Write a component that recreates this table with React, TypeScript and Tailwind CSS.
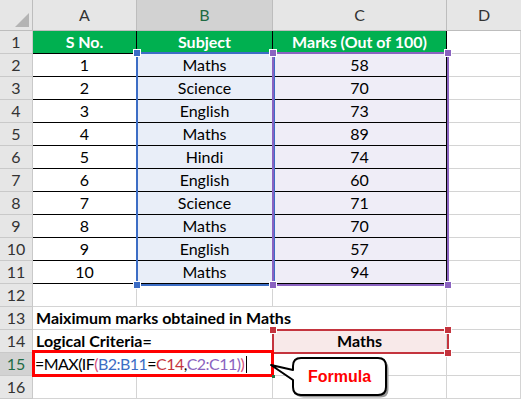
import React from "react"

const rows = [
  { n: 1, subject: "Maths", marks: 58 },
  { n: 2, subject: "Science", marks: 70 },
  { n: 3, subject: "English", marks: 73 },
  { n: 4, subject: "Maths", marks: 89 },
  { n: 5, subject: "Hindi", marks: 74 },
  { n: 6, subject: "English", marks: 60 },
  { n: 7, subject: "Science", marks: 71 },
  { n: 8, subject: "Maths", marks: 70 },
  { n: 9, subject: "English", marks: 57 },
  { n: 10, subject: "Maths", marks: 94 },
]

const grid = "border-r border-b border-[#d4d4d4]"
const black = "border-r border-b border-black"

function RowHead({ n, active }: { n: number; active?: boolean }) {
  return (
    <div
      className={`flex items-center justify-center border-r border-b border-[#c9c9c9] ${
        active ? "bg-[#d2d2d2] text-[#1f6b44]" : "bg-[#e6e6e6] text-[#333]"
      }`}
    >
      {n}
    </div>
  )
}

function Handle({ x, y, color }: { x: number; y: number; color: string }) {
  return (
    <div
      className="absolute w-[8px] h-[8px] border border-white"
      style={{ left: x - 4, top: y - 4, background: color }}
    />
  )
}

export default function App() {
  return (
    <div className="relative w-[521px] h-[399px] overflow-hidden bg-white text-[16px] text-black font-['Lato','Liberation_Sans',sans-serif]">
      <div className="grid grid-cols-[33px_104px_136px_174px_1fr] grid-rows-[31px_repeat(16,23px)] leading-none">
        {/* column headers */}
        <div className="relative bg-[#e6e6e6] border-r border-b border-[#bdbdbd]">
          <div className="absolute right-[3px] bottom-[3px] w-0 h-0 border-l-[14px] border-l-transparent border-b-[14px] border-b-[#b4b4b4]" />
        </div>
        <div className="flex items-center justify-center bg-[#e6e6e6] text-[#333] border-r border-b border-[#bdbdbd]">A</div>
        <div className="flex items-center justify-center bg-[#d2d2d2] text-[#1f6b44] border-r border-b border-[#bdbdbd]">B</div>
        <div className="flex items-center justify-center bg-[#e6e6e6] text-[#333] border-r border-b border-[#bdbdbd]">C</div>
        <div className="flex items-center justify-center bg-[#e6e6e6] text-[#333] border-b border-[#bdbdbd]">D</div>

        {/* row 1 */}
        <RowHead n={1} />
        <div className={`flex items-center justify-center bg-[#00b050] text-white font-bold ${black}`}>S No.</div>
        <div className={`flex items-center justify-center bg-[#00b050] text-white font-bold ${black}`}>Subject</div>
        <div className={`flex items-center justify-center bg-[#00b050] text-white font-bold ${black}`}>Marks (Out of 100)</div>
        <div className={grid} />

        {rows.map((r) => (
          <React.Fragment key={r.n}>
            <RowHead n={r.n + 1} />
            <div className={`flex items-center justify-center ${black}`}>{r.n}</div>
            <div className={`flex items-center justify-center bg-[#e9eef8] ${black}`}>{r.subject}</div>
            <div className={`flex items-center justify-center bg-[#efedf7] ${black}`}>{r.marks}</div>
            <div className={grid} />
          </React.Fragment>
        ))}

        {/* row 12 */}
        <RowHead n={12} />
        <div className={grid} />
        <div className={grid} />
        <div className={grid} />
        <div className={grid} />

        {/* row 13 */}
        <RowHead n={13} />
        <div className={`col-span-3 flex items-center pl-[3px] font-bold whitespace-nowrap ${grid}`}>
          Maiximum marks obtained in Maths
        </div>
        <div className={grid} />

        {/* row 14 */}
        <RowHead n={14} />
        <div className={`col-span-2 flex items-center pl-[3px] font-bold ${grid}`}>Logical Criteria=</div>
        <div className={`flex items-center justify-center bg-[#f8e9e9] font-bold ${grid}`}>Maths</div>
        <div className={grid} />

        {/* row 15 */}
        <RowHead n={15} active />
        <div className={`col-span-2 flex items-center pl-[2px] whitespace-nowrap tracking-[-0.55px] ${grid}`}>
          <span>=MAX(IF</span>
          <span className="text-[#d84f7a]">(</span>
          <span className="text-[#3c6dc5]">B2:B11</span>
          <span>=</span>
          <span className="text-[#c4343e]">C14</span>
          <span>,</span>
          <span className="text-[#8a62c0]">C2:C11</span>
          <span className="text-[#8a62c0]">)</span>
          <span className="text-[#d84f7a]">)</span>
          <span className="ml-[2px] w-px h-[17px] bg-black" />
        </div>
        <div className={grid} />
        <div className={grid} />

        {/* row 16 */}
        <RowHead n={16} />
        <div className={grid} />
        <div className={grid} />
        <div className={grid} />
        <div className={grid} />
      </div>

      {/* range highlights */}
      <div className="absolute left-[136px] top-[52px] w-[139px] h-[234px] border-2 border-[#3c6dc5]" />
      <div className="absolute left-[272px] top-[52px] w-[177px] h-[234px] border-2 border-[#8a62c0]" />
      <div className="absolute left-[272px] top-[329px] w-[177px] h-[25px] border-2 border-[#c4343e]" />
      <Handle x={137} y={53} color="#3c6dc5" />
      <Handle x={137} y={285} color="#3c6dc5" />
      <Handle x={273} y={53} color="#8a62c0" />
      <Handle x={448} y={53} color="#8a62c0" />
      <Handle x={273} y={285} color="#8a62c0" />
      <Handle x={448} y={285} color="#8a62c0" />
      <Handle x={273} y={330} color="#c4343e" />
      <Handle x={448} y={330} color="#c4343e" />
      <Handle x={448} y={353} color="#c4343e" />

      {/* active formula cell */}
      <div className="absolute left-[32px] top-[350px] w-[242px] h-[27px] border-[3px] border-[#ff0000]" />
      <div className="absolute left-[272px] top-[375px] w-[3px] h-[3px] bg-[#217346]" />

      {/* callout */}
      <div className="absolute left-[266px] top-[352px] w-[126px] h-[47px]">
        <svg width="126" height="47" viewBox="0 0 126 47" className="absolute inset-0">
          <path
            d="M35 6 H112 Q120 6 120 14 V35 Q120 43 112 43 H35 Q27 43 27 35 V28 L5 13 L27 18 V14 Q27 6 35 6 Z"
            fill="#9a9a9a"
            transform="translate(2.5 2.5)"
          />
          <path
            d="M35 6 H112 Q120 6 120 14 V35 Q120 43 112 43 H35 Q27 43 27 35 V28 L5 13 L27 18 V14 Q27 6 35 6 Z"
            fill="white"
            stroke="black"
            strokeWidth="2"
            strokeLinejoin="round"
          />
        </svg>
        <div className="absolute left-[27px] top-[6px] w-[93px] h-[37px] flex items-center justify-center text-[#ff0000] font-bold text-[16px] font-['Liberation_Sans',Arial,sans-serif]">
          Formula
        </div>
      </div>
    </div>
  )
}
